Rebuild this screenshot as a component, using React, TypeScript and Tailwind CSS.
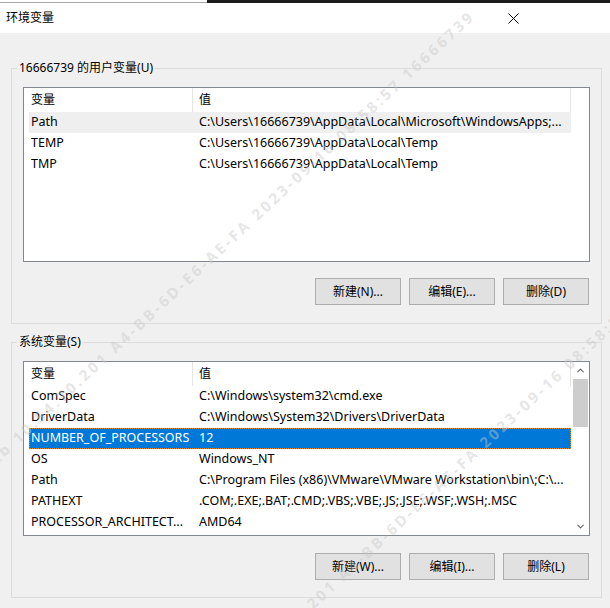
import { ChevronDown, ChevronUp } from "lucide-react";

type Row = { name: string; value: string };

const userVars: Row[] = [
  { name: "Path", value: "C:\\Users\\16666739\\AppData\\Local\\Microsoft\\WindowsApps;..." },
  { name: "TEMP", value: "C:\\Users\\16666739\\AppData\\Local\\Temp" },
  { name: "TMP", value: "C:\\Users\\16666739\\AppData\\Local\\Temp" },
];

const sysVars: Row[] = [
  { name: "ComSpec", value: "C:\\Windows\\system32\\cmd.exe" },
  { name: "DriverData", value: "C:\\Windows\\System32\\Drivers\\DriverData" },
  { name: "NUMBER_OF_PROCESSORS", value: "12" },
  { name: "OS", value: "Windows_NT" },
  { name: "Path", value: "C:\\Program Files (x86)\\VMware\\VMware Workstation\\bin\\;C:\\..." },
  { name: "PATHEXT", value: ".COM;.EXE;.BAT;.CMD;.VBS;.VBE;.JS;.JSE;.WSF;.WSH;.MSC" },
  { name: "PROCESSOR_ARCHITECT...", value: "AMD64" },
];

const watermark = "gkb 10.54.70.201 A4-BB-6D-E6-AE-FA 2023-09-16 08:58:57 16666739";

function VarRow({ row, state }: { row: Row; state?: "muted" | "active" }) {
  const tone =
    state === "active"
      ? "bg-[#0078d7] text-white border border-dotted border-[#d8882a]"
      : state === "muted"
        ? "bg-[#efefef] border border-transparent"
        : "border border-transparent";
  return (
    <div className={`ml-[5px] flex h-[21px] w-[542px] items-center whitespace-nowrap text-[12.5px] ${tone}`}>
      <div className="w-[163px] overflow-hidden pl-[1px]">{row.name}</div>
      <div className="flex-1 overflow-hidden pl-[6px]">{row.value}</div>
    </div>
  );
}

function Header() {
  return (
    <div className="flex h-[24px] items-center pl-[5px]">
      <div className="flex h-full w-[164px] items-center border-r border-[#e5e5e5] pl-[2px]">变量</div>
      <div className="flex h-full w-[378px] items-center border-r border-[#e5e5e5] pl-[6px]">值</div>
    </div>
  );
}

function Button({ label }: { label: string }) {
  return (
    <button className="flex h-[27px] w-[86px] items-center justify-center border border-[#adadad] bg-[#e1e1e1] text-black">
      {label}
    </button>
  );
}

function Group({
  title,
  rows,
  buttons,
  selected,
  muted,
  scroll,
  className,
  gap,
  bottom,
}: {
  title: string;
  rows: Row[];
  buttons: string[];
  selected?: number;
  muted?: number;
  scroll?: boolean;
  className: string;
  gap: string;
  bottom: string;
}) {
  return (
    <fieldset className={`ml-[11px] w-[591px] border border-[#dcdcdc] p-0 ${className}`}>
      <legend className="ml-[5px] px-[2px] leading-[16px]">{title}</legend>
      <div className={`px-[11px] pt-[11px] ${bottom}`}>
        <div className="flex h-[175px] border border-[#828790] bg-white">
          <div className="flex-1">
            <Header />
            {rows.map((row, i) => (
              <VarRow
                key={row.name + i}
                row={row}
                state={i === selected ? "active" : i === muted ? "muted" : undefined}
              />
            ))}
          </div>
          {scroll && (
            <div className="flex w-[17px] flex-col items-center">
              <div className="flex h-[17px] w-full items-center justify-center text-[#606060]">
                <ChevronUp className="size-[11px]" strokeWidth={2.2} />
              </div>
              <div className="h-[48px] w-[15px] bg-[#cdcdcd]" />
              <div className="flex-1" />
              <div className="flex h-[17px] w-full items-center justify-center text-[#606060]">
                <ChevronDown className="size-[11px]" strokeWidth={2.2} />
              </div>
            </div>
          )}
        </div>
        <div className={`flex justify-end gap-[8px] pr-[1px] ${gap}`}>
          {buttons.map((b) => (
            <Button key={b} label={b} />
          ))}
        </div>
      </div>
    </fieldset>
  );
}

export default function App() {
  return (
    <div className="relative flex h-[608px] w-[610px] flex-col overflow-hidden bg-[#f0f0f0] font-['Noto_Sans','Noto_Sans_CJK_SC',sans-serif] text-[12px] text-black">
      <div className="flex h-[3px]">
        <div className="w-[207px] border-b border-[#a8a8a8] bg-white" />
        <div className="flex-1 bg-[#1b1b1b]" />
      </div>
      <div className="flex h-[30px] items-center justify-between bg-white pl-[6px] pr-[91px]">
        <span>环境变量</span>
        <svg width="11" height="11" viewBox="0 0 11 11" className="text-black">
          <path d="M0.5 0.5 L10.5 10.5 M10.5 0.5 L0.5 10.5" stroke="currentColor" strokeWidth="1" />
        </svg>
      </div>

      <div className="pt-[27px]">
        <Group
          title="16666739 的用户变量(U)"
          rows={userVars}
          muted={0}
          buttons={["新建(N)...", "编辑(E)...", "删除(D)"]}
          className=""
          gap="mt-[16px]"
          bottom="pb-[18px]"
        />
        <Group
          title="系统变量(S)"
          rows={sysVars}
          selected={2}
          scroll
          buttons={["新建(W)...", "编辑(I)...", "删除(L)"]}
          className="mt-[10px]"
          gap="mt-[17px]"
          bottom="pb-[17px]"
        />
      </div>

      {/* watermark */}
      <span className="pointer-events-none absolute left-[-18px] top-[460px] origin-left rotate-[-43deg] whitespace-nowrap text-[15px] font-bold leading-[20px] tracking-[3px] text-[#c8c8c8]/45">
        {watermark}
      </span>
      <span className="pointer-events-none absolute left-[210px] top-[688px] origin-left rotate-[-43deg] whitespace-nowrap text-[15px] font-bold leading-[20px] tracking-[3px] text-[#c8c8c8]/45">
        {watermark}
      </span>
    </div>
  );
}
